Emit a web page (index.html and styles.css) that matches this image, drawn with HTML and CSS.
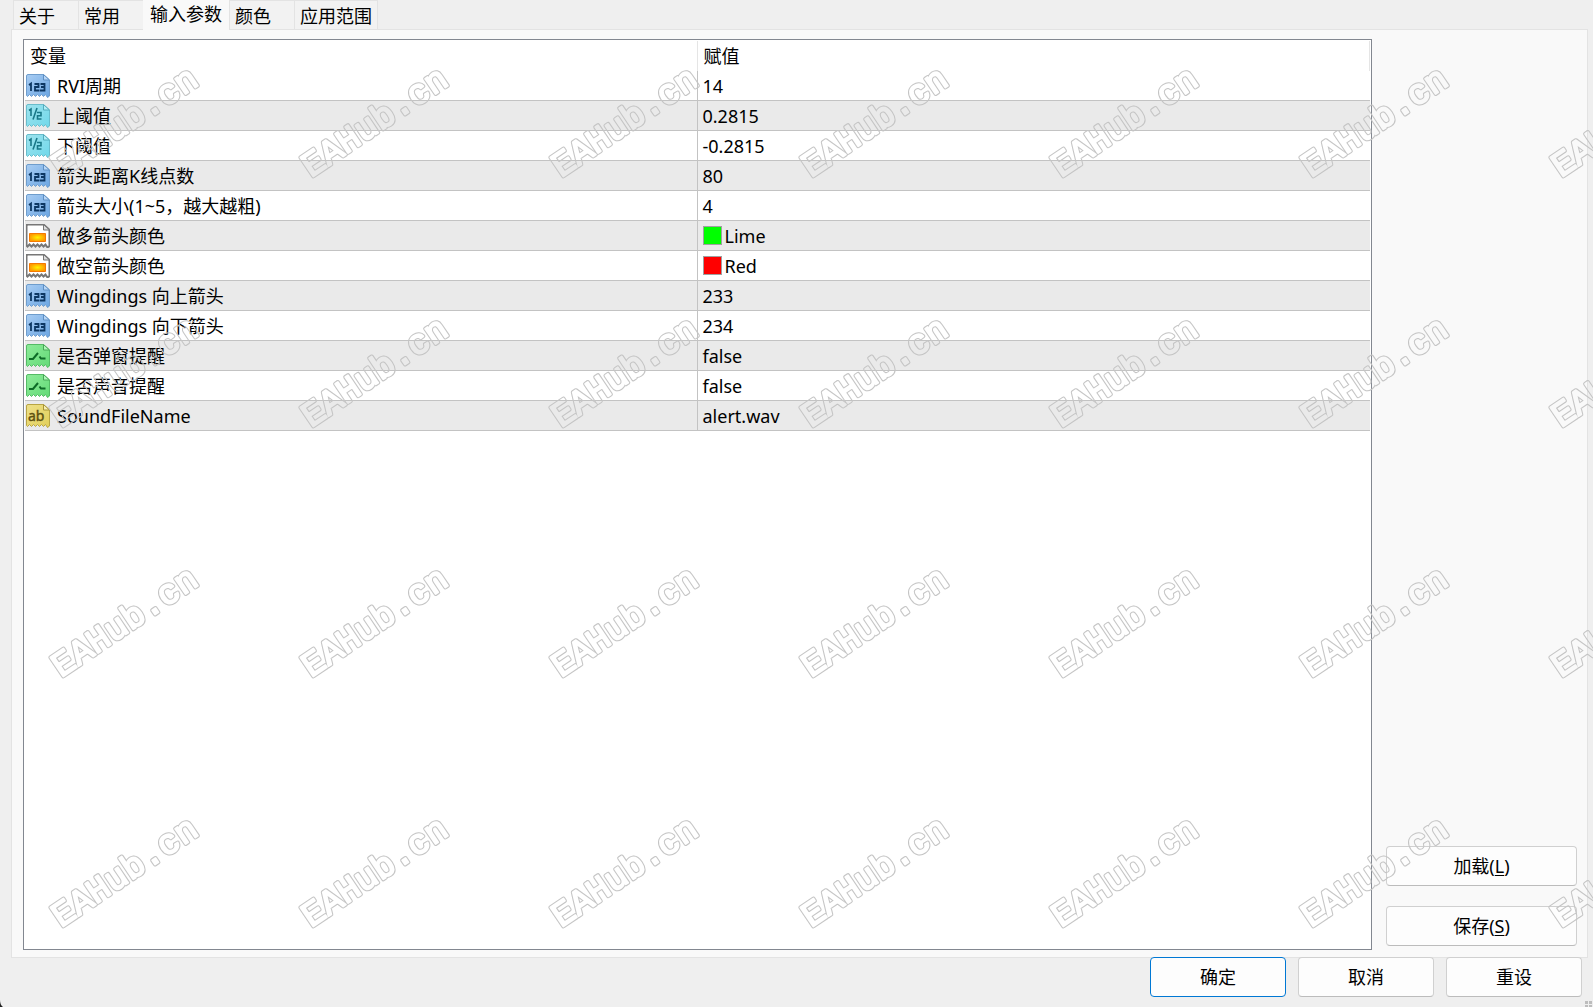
FILE: index.html
```html
<!DOCTYPE html>
<html lang="zh-CN">
<head>
<meta charset="utf-8">
<title>输入参数</title>
<link rel="stylesheet" href="styles.css">
</head>
<body>
<svg class="defs" aria-hidden="true">
  <defs>
    <linearGradient id="g-blue" x1="0" y1="0" x2="1" y2="1"><stop offset="0" stop-color="#a9cdf3"/><stop offset="1" stop-color="#6aa5e2"/></linearGradient>
    <linearGradient id="g-cyan" x1="0" y1="0" x2="1" y2="1"><stop offset="0" stop-color="#9ee3ee"/><stop offset="1" stop-color="#6fd8ea"/></linearGradient>
    <linearGradient id="g-green" x1="0" y1="0" x2="1" y2="1"><stop offset="0" stop-color="#8eeb9a"/><stop offset="1" stop-color="#62da76"/></linearGradient>
    <linearGradient id="g-yellow" x1="0" y1="0" x2="1" y2="1"><stop offset="0" stop-color="#eee08a"/><stop offset="1" stop-color="#e2cf58"/></linearGradient>
    <radialGradient id="g-fire"><stop offset="0" stop-color="#fff200"/><stop offset="1" stop-color="#ff9a00"/></radialGradient>
    <path id="sheet" d="M.5 21.500V2Q.5.500 2 .500H17.500L23.500 6V22l-2 1.500-2-3-2 2-2-2-2 2-2-2-2 2-2-2-2 2-2-2-2 2z"/>
    <path id="fold" d="M17.500.500V6H23.500z"/>
    <symbol id="i-int" viewBox="0 0 24 24">
      <use href="#sheet" fill="url(#g-blue)" stroke="#6f9dcc"/><use href="#fold" fill="#b9d6f5" stroke="#5f90c4"/>
      <path d="M3 11l2-1.500V17M8.500 10h4v3h-3.500v3.500h4.500M14.500 10h4v6.500h-4.500M15 13h3.500" fill="none" stroke="#0d3763" stroke-width="1.800"/>
    </symbol>
    <symbol id="i-double" viewBox="0 0 24 24">
      <use href="#sheet" fill="url(#g-cyan)" stroke="#69bccb"/><use href="#fold" fill="#b4edf5" stroke="#55adbd"/>
      <path d="M3 6.500l2-1.500v7M11 4L7 15.500M11 8.500h4v3.200h-3.500V15H15.500" fill="none" stroke="#197888" stroke-width="1.600"/>
    </symbol>
    <symbol id="i-color" viewBox="0 0 24 24">
      <use href="#sheet" fill="#fff" stroke="#777" stroke-width="2"/><use href="#fold" fill="#ddd" stroke="#777"/>
      <path d="M3.500 9.500h16v8h-16z" fill="url(#g-fire)" stroke="#f57900"/>
    </symbol>
    <symbol id="i-bool" viewBox="0 0 24 24">
      <use href="#sheet" fill="url(#g-green)" stroke="#55bb66"/><use href="#fold" fill="#b2f5ba" stroke="#48a858"/>
      <path d="M3 15h4l5-6M13.500 12.500l1.500 2H19.500" fill="none" stroke="#0d6b27" stroke-width="2"/>
    </symbol>
    <symbol id="i-string" viewBox="0 0 24 24">
      <use href="#sheet" fill="url(#g-yellow)" stroke="#b8a544"/><use href="#fold" fill="#f6edb4" stroke="#a89536"/>
      <text class="glyph-ab" x="2" y="17" fill="#5e5110" stroke="#5e5110" stroke-width=".4">ab</text>
    </symbol>
    <mask id="outline" maskUnits="userSpaceOnUse" x="-20" y="-50" width="220" height="80">
      <text class="mark" fill="#fff" stroke="#fff" stroke-width="4">EAHub.cn</text>
      <text class="mark" fill="#000" stroke="#000" stroke-width="2">EAHub.cn</text>
    </mask>
    <pattern id="marks" width="250" height="250" patternUnits="userSpaceOnUse">
      <g transform="translate(61 178) rotate(-34)"><rect x="-20" y="-50" width="220" height="80" fill="#c4c4c4" mask="url(#outline)"/></g>
    </pattern>
  </defs>
</svg>

<main class="dialog">
  <div class="tabs" role="tablist">
    <button class="tab" role="tab">关于</button>
    <button class="tab" role="tab">常用</button>
    <button class="tab tab-active" role="tab" aria-selected="true">输入参数</button>
    <button class="tab" role="tab">颜色</button>
    <button class="tab tab-last" role="tab">应用范围</button>
  </div>

  <section class="panel" role="tabpanel">
    <div class="list">
      <table class="params">
        <thead><tr><th class="col-name">变量</th><th>赋值</th></tr></thead>
        <tbody>
          <tr><td><span class="cell"><svg class="icon"><use href="#i-int"/></svg>RVI周期</span></td><td>14</td></tr>
          <tr><td><span class="cell"><svg class="icon"><use href="#i-double"/></svg>上阈值</span></td><td>0.2815</td></tr>
          <tr><td><span class="cell"><svg class="icon"><use href="#i-double"/></svg>下阈值</span></td><td>-0.2815</td></tr>
          <tr><td><span class="cell"><svg class="icon"><use href="#i-int"/></svg>箭头距离K线点数</span></td><td>80</td></tr>
          <tr><td><span class="cell"><svg class="icon"><use href="#i-int"/></svg>箭头大小(1~5，越大越粗)</span></td><td>4</td></tr>
          <tr><td><span class="cell"><svg class="icon"><use href="#i-color"/></svg>做多箭头颜色</span></td><td><span class="color"><i class="swatch lime"></i>Lime</span></td></tr>
          <tr><td><span class="cell"><svg class="icon"><use href="#i-color"/></svg>做空箭头颜色</span></td><td><span class="color"><i class="swatch red"></i>Red</span></td></tr>
          <tr><td><span class="cell"><svg class="icon"><use href="#i-int"/></svg>Wingdings 向上箭头</span></td><td>233</td></tr>
          <tr><td><span class="cell"><svg class="icon"><use href="#i-int"/></svg>Wingdings 向下箭头</span></td><td>234</td></tr>
          <tr><td><span class="cell"><svg class="icon"><use href="#i-bool"/></svg>是否弹窗提醒</span></td><td>false</td></tr>
          <tr><td><span class="cell"><svg class="icon"><use href="#i-bool"/></svg>是否声音提醒</span></td><td>false</td></tr>
          <tr><td><span class="cell"><svg class="icon"><use href="#i-string"/></svg>SoundFileName</span></td><td>alert.wav</td></tr>
        </tbody>
      </table>
    </div>
    <div class="side">
      <button class="btn">加载(<u>L</u>)</button>
      <button class="btn">保存(<u>S</u>)</button>
    </div>
  </section>

  <footer class="actions">
    <button class="btn btn-default">确定</button>
    <button class="btn">取消</button>
    <button class="btn">重设</button>
  </footer>

  <svg class="watermark" aria-hidden="true"><rect width="100%" height="100%" fill="url(#marks)"/></svg>
  <svg class="corner" viewBox="0 0 3 7" aria-hidden="true"><path d="M0 0q0 5 3 7H0z" fill="#222"/></svg>
  <svg class="grip" viewBox="0 0 8 6" aria-hidden="true"><path d="M0 0h3v3H0zM4 0h3v3H4zM0 4h3v2H0zM4 4h3v2H4z" fill="#bdbdbd"/></svg>
</main>
</body>
</html>
```
FILE: styles.css
```css
* { box-sizing: border-box; }

body {
  margin: 0;
  background: #efefef;
  color: #000;
  font: 18px/28px "Noto Sans", "Noto Sans CJK SC", sans-serif;
}

button { font: inherit; color: inherit; }

.defs { position: absolute; width: 0; height: 0; }

.dialog {
  position: relative;
  display: flex;
  flex-direction: column;
  min-height: 100vh;
  overflow: hidden;
}

.tabs {
  display: flex;
  height: 29px;
  padding-left: 13px;
}

.tab {
  min-width: 65px;
  padding: 1px 5px 0;
  border: solid #e3e3e3;
  border-width: 1px 0 0 1px;
  background: #f2f2f2;
  line-height: 26px;
  text-align: left;
  white-space: nowrap;
}

.tab-active {
  z-index: 1;
  width: 86px;
  height: 30px;
  padding: 0 6px 4px;
  border-color: transparent;
  background: #f9f9f9;
}

.tab-last { border-right-width: 1px; }

.panel {
  flex: 1;
  display: flex;
  gap: 14px;
  margin: 0 5px 0 11px;
  padding: 9px 10px 7px 11px;
  border: 1px solid #e3e3e3;
  background: #f9f9f9;
}

.list {
  flex: 1;
  padding: 1px;
  border: 1px solid #828790;
  background: #fff;
}

.params {
  width: 100%;
  table-layout: fixed;
  border-collapse: separate;
  border-spacing: 0;
}

.params th {
  height: 30px;
  padding: 0 6px;
  border-right: 1px solid #e5e5e5;
  font-weight: 400;
  text-align: left;
}

.params .col-name { width: calc(50% - 1px); padding-left: 5px; }

.params td {
  height: 30px;
  padding: 0 1px;
  border-bottom: 1px solid #c3c3c3;
}

.params td:first-child { border-right: 1px solid #c3c3c3; }
.params td:last-child { padding-left: 5px; }
.params tbody tr:nth-child(even) { background: #eaeaea; }

.cell { display: flex; align-items: center; gap: 7px; }
.icon { width: 24px; height: 24px; }

.color { display: flex; align-items: center; gap: 3px; }
.swatch { width: 19px; height: 19px; border: 1px solid #a0a0a0; }
.lime { background: #0f0; }
.red { background: #f00; }

.side {
  display: flex;
  flex-direction: column;
  justify-content: flex-end;
  gap: 20px;
  width: 191px;
  padding-bottom: 4px;
}

.btn {
  height: 40px;
  padding: 0;
  border: 1px solid #d0d0d0;
  border-bottom-color: #bcbcbc;
  border-radius: 4px;
  background: #fdfdfd;
}

.btn u { text-underline-offset: 2px; }
.btn-default { border-color: #0078d4; }

.actions {
  display: flex;
  justify-content: flex-end;
  gap: 12px;
  height: 50px;
  margin-top: -1px;
  padding-right: 11px;
  z-index: 1;
}

.actions .btn { width: 136px; }

.watermark {
  position: absolute;
  inset: 0;
  z-index: 2;
  width: 100%;
  height: 100%;
  pointer-events: none;
}

.mark {
  font: 35px "Liberation Mono", monospace;
  stroke-linejoin: round;
}

.corner { position: absolute; left: 0; bottom: 0; width: 3px; height: 7px; }
.grip { position: absolute; right: 0; bottom: 0; width: 8px; height: 6px; }

.glyph-ab { font: 14px "Noto Sans", sans-serif; }
```
